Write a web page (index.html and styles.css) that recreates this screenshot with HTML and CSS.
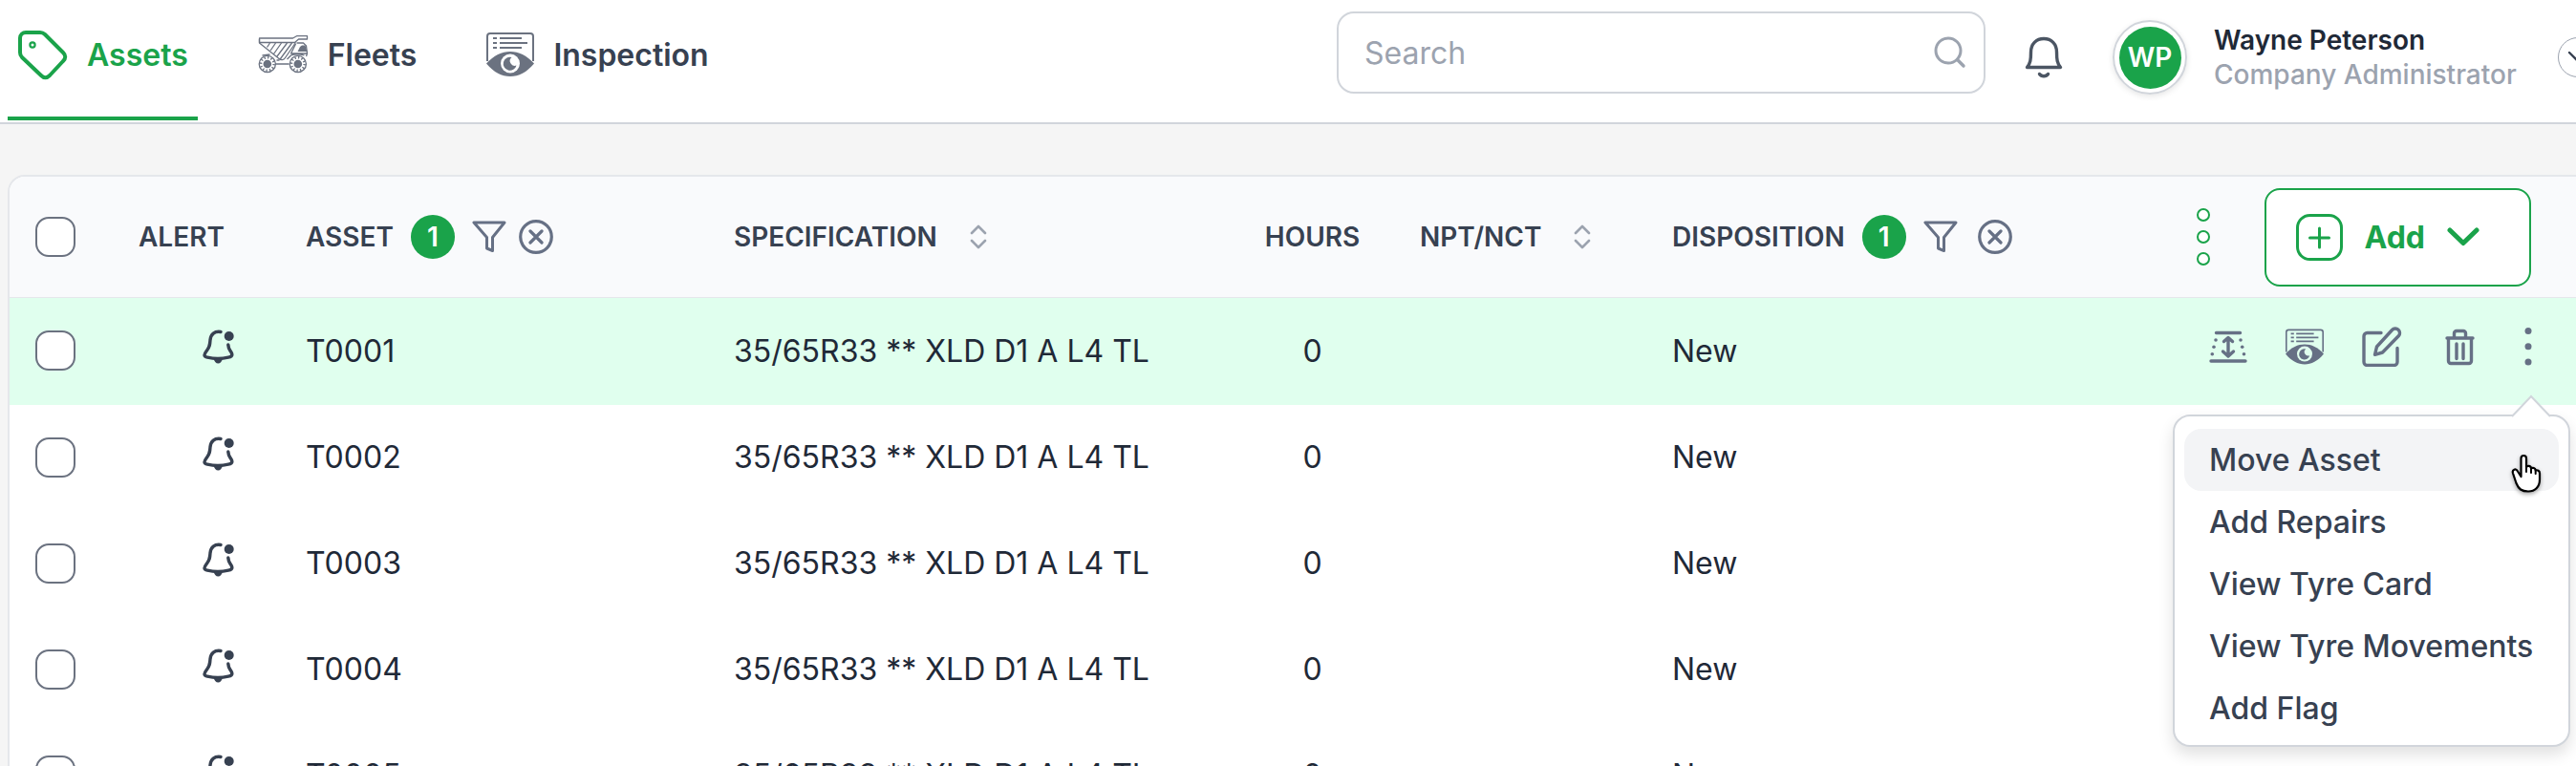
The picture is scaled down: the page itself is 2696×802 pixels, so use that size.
FILE: index.html
```html
<!DOCTYPE html>
<html lang="en">

<head>
  <meta charset="UTF-8">
  <meta name="viewport" content="width=device-width, initial-scale=1">
  <title>Assets</title>
  <link rel="stylesheet" href="styles.css">
</head>

<body>
  <!-- Shared icons -->
  <svg class="sprite" aria-hidden="true">
    <symbol id="icon-tag" viewBox="0 0 53 53">
      <path d="M3 9a6 6 0 0 1 6-6h15c2 0 3.500 .6 5 2l19 19c3 3 3 6 0 9L34 48c-3 3-6 3-9 0L5 29c-1.400-1.500-2-3-2-5z" fill="none" stroke="currentColor" stroke-width="4" stroke-linejoin="round"/>
      <circle cx="16" cy="16" r="2.600" fill="none" stroke="currentColor" stroke-width="2.200"/>
    </symbol>
    <symbol id="icon-truck" viewBox="0 0 52 40">
      <g fill="none" stroke="currentColor" stroke-width="1.300" stroke-linejoin="round">
        <path d="M1 3h35l4-2.300h11V4h-9l-4 3.500H1z"/>
        <path d="M1 4v4l20 16c2.500 2.500 5.500 2 7-.5L39 7.500M12 8l-3 4.500M18 8l-5.500 8M24 8l-8 11.500M30 8 19.500 22M35 8 23 24.500"/>
        <path d="M40 8h7l3 3 1 8-1 3M39 9l-5 10h17M12 20l-8 1M18 30h14M19 26l3 0M30 25l4-4c5-2 11-1 14 0"/>
        <circle cx="9.300" cy="30" r="8.600"/>
        <circle cx="41.300" cy="30" r="8.600"/>
        <circle cx="9.300" cy="30" r="6.800" stroke-dasharray="1.300 2.260" stroke-width="2.400"/>
        <circle cx="41.300" cy="30" r="6.800" stroke-dasharray="1.300 2.260" stroke-width="2.400"/>
      </g>
      <circle cx="9.300" cy="30" r="4.300" fill="currentColor"/>
      <circle cx="41.300" cy="30" r="4.300" fill="currentColor"/>
      <path d="M41 17l2.500-5 2-1.500H49l2 6.500z" fill="currentColor"/>
    </symbol>
    <symbol id="icon-inspect" viewBox="0 0 50 46">
      <path d="M1 30V4a3 3 0 0 1 3-3h42a3 3 0 0 1 3 3v26" fill="none" stroke="currentColor" stroke-width="2"/>
      <path d="M7 6h4M14 6h23M7 11h4M14 11h29M7 16h4M14 16h23" fill="none" stroke="currentColor" stroke-width="2"/>
      <path d="M0 32.500C8 24 16 20 25 20s17 4 25 12.500C42 42 34 46 25 46S8 42 0 32.500z" fill="currentColor"/>
      <circle class="cut" cx="25" cy="32.500" r="10"/>
      <path d="M26.500 26a5 5 0 0 0 5 8.500 7 7 0 1 1-5-8.500z" fill="currentColor"/>
    </symbol>
    <symbol id="icon-alert" viewBox="0 0 33 36">
      <g fill="none" stroke="currentColor" stroke-width="3.400" stroke-linecap="round">
        <path d="M19 2.500C12.500 1.500 8.500 5 8 11c-.3 5-.5 7-3.500 11-1.500 2-2.700 3.500-2.500 5 .2 1.300 1.500 1.900 3 2.200 7 1.600 15 1.600 22 0 2.500-.5 4-1.500 3.800-3.200-.2-1.500-1-2.500-2-4-1.200-1.800-1.800-3.500-2-6"/>
      </g>
      <circle cx="27.700" cy="7" r="5" fill="currentColor"/>
      <path d="M11.500 30h9.500c-.5 3.500-2.500 5.500-4.700 5.500S12 33.500 11.500 30z" fill="currentColor"/>
    </symbol>
    <symbol id="icon-funnel" viewBox="0 0 36 36">
      <path d="M2 3h32L21.500 18.500v14l-6-2.500V18.500z" fill="none" stroke="currentColor" stroke-width="3" stroke-linejoin="round"/>
    </symbol>
    <symbol id="icon-clear" viewBox="0 0 36 36">
      <path d="M12 12l12 12M24 12 12 24" stroke="currentColor" stroke-width="3.200" stroke-linecap="round"/>
      <circle cx="18" cy="18" r="16.300" fill="none" stroke="currentColor" stroke-width="3.200"/>
    </symbol>
    <symbol id="icon-sort" viewBox="0 0 18 26">
      <path d="M2 9l7-7 7 7M2 17l7 7 7-7" fill="none" stroke="currentColor" stroke-width="2.600" stroke-linecap="round" stroke-linejoin="round"/>
    </symbol>
  </svg>

  <!-- Top navigation bar -->
  <header class="topbar">
    <nav class="tabs">
      <a class="tab tab-active" href="#assets">
        <svg class="tab-icon"><use href="#icon-tag"/></svg>Assets
      </a>
      <a class="tab" href="#fleets">
        <svg class="tab-icon tab-icon-truck"><use href="#icon-truck"/></svg>Fleets
      </a>
      <a class="tab" href="#inspection">
        <svg class="tab-icon tab-icon-form"><use href="#icon-inspect"/></svg>Inspection
      </a>
    </nav>

    <div class="topbar-right">
      <div class="search">
        <input type="search" placeholder="Search" aria-label="Search">
        <svg class="search-icon" viewBox="0 0 34 34">
          <circle cx="15" cy="15" r="13" fill="none" stroke="currentColor" stroke-width="3"/>
          <path d="M24.500 24.500 31 31" stroke="currentColor" stroke-width="3.400" stroke-linecap="round"/>
        </svg>
      </div>
      <button class="icon-button bell" type="button" aria-label="Notifications">
        <svg width="40" height="44" viewBox="0 0 40 44">
          <path d="M2.500 32.500c3.500-4.500 4-8 4-16C6.500 8 12 2.500 20 2.500S33.500 8 33.500 16.500c0 8 .5 11.500 4 16z" fill="none" stroke="currentColor" stroke-width="3.400" stroke-linejoin="round"/>
          <path d="M15.500 39.500c2 3 7 3 9 0" fill="none" stroke="currentColor" stroke-width="3.400" stroke-linecap="round"/>
        </svg>
      </button>
      <div class="avatar"><span>WP</span></div>
      <div class="user">
        <div class="user-name">Wayne Peterson</div>
        <div class="user-role">Company Administrator</div>
      </div>
      <button class="icon-button user-toggle" type="button" aria-label="Account menu">
        <svg width="22" height="12" viewBox="0 0 22 12"><path d="M2 1l9 9 9-9" fill="none" stroke="currentColor" stroke-width="2.400" stroke-linecap="round"/></svg>
      </button>
    </div>
  </header>

  <!-- Asset list -->
  <main class="content">
    <table class="assets">
      <colgroup>
        <col class="col-check">
        <col class="col-alert">
        <col class="col-asset">
        <col class="col-spec">
        <col class="col-hours">
        <col class="col-npt">
        <col class="col-disposition">
        <col>
      </colgroup>
      <thead>
        <tr>
          <th><input type="checkbox" class="check" aria-label="Select all assets"></th>
          <th>ALERT</th>
          <th>
            <div class="heading">ASSET
              <span class="count">1</span>
              <button class="icon-button" type="button" aria-label="Filter asset"><svg class="head-icon"><use href="#icon-funnel"/></svg></button>
              <button class="icon-button" type="button" aria-label="Clear asset filter"><svg class="head-icon"><use href="#icon-clear"/></svg></button>
            </div>
          </th>
          <th>
            <div class="heading heading-sort">SPECIFICATION
              <button class="icon-button" type="button" aria-label="Sort by specification"><svg class="sort-icon"><use href="#icon-sort"/></svg></button>
            </div>
          </th>
          <th class="hours">HOURS</th>
          <th>
            <div class="heading heading-sort">NPT/NCT
              <button class="icon-button" type="button" aria-label="Sort by NPT/NCT"><svg class="sort-icon"><use href="#icon-sort"/></svg></button>
            </div>
          </th>
          <th>
            <div class="heading heading-wide">DISPOSITION
              <span class="count">1</span>
              <button class="icon-button" type="button" aria-label="Filter disposition"><svg class="head-icon"><use href="#icon-funnel"/></svg></button>
              <button class="icon-button" type="button" aria-label="Clear disposition filter"><svg class="head-icon"><use href="#icon-clear"/></svg></button>
            </div>
          </th>
          <th>
            <div class="toolbar">
              <button class="icon-button columns" type="button" aria-label="Columns">
                <svg width="14" height="60" viewBox="0 0 14 60"><g fill="#fff" stroke="currentColor" stroke-width="2"><circle cx="7" cy="7" r="6"/><circle cx="7" cy="30" r="6"/><circle cx="7" cy="53" r="6"/></g></svg>
              </button>
              <button class="add" type="button">
                <svg width="49" height="49" viewBox="0 0 49 49" fill="none" stroke="currentColor" stroke-width="3" stroke-linecap="round">
                  <rect x="1.500" y="1.500" width="46" height="46" rx="13"/>
                  <path d="M24.500 15v20M14.500 25h20"/>
                </svg>
                Add
                <svg width="34" height="20" viewBox="0 0 34 20"><path d="M3 3l14 13.500L31 3" fill="none" stroke="currentColor" stroke-width="5" stroke-linecap="round" stroke-linejoin="round"/></svg>
              </button>
            </div>
          </th>
        </tr>
      </thead>
      <tbody>
        <tr class="selected">
          <td><input type="checkbox" class="check" aria-label="Select T0001"></td>
          <td class="alert"><svg class="alert-icon"><use href="#icon-alert"/></svg></td>
          <td>T0001</td>
          <td>35/65R33 ** XLD D1 A L4 TL</td>
          <td class="hours">0</td>
          <td></td>
          <td>New</td>
          <td class="actions-cell">
            <div class="actions">
              <button class="icon-button" type="button" aria-label="Measure">
                <svg width="40" height="40" viewBox="0 0 40 40">
                  <g fill="none" stroke="currentColor" stroke-width="3.400" stroke-linecap="round" stroke-linejoin="round">
                    <path d="M7.500 5.500h25M2 35h36M20 11.500v18M15.500 14.500 20 10.500l4.500 4M14.500 25l5.500 5 5.500-5"/>
                  </g>
                  <g fill="currentColor"><circle cx="7" cy="13" r="1.800"/><circle cx="5" cy="20.300" r="1.800"/><circle cx="3.300" cy="27.700" r="1.800"/><circle cx="33" cy="13" r="1.800"/><circle cx="34.700" cy="20.300" r="1.800"/><circle cx="36.500" cy="27.700" r="1.800"/></g>
                </svg>
              </button>
              <button class="icon-button" type="button" aria-label="Inspect">
                <svg width="40" height="38"><use href="#icon-inspect"/></svg>
              </button>
              <button class="icon-button" type="button" aria-label="Edit">
                <svg width="42" height="42" viewBox="0 0 42 42" fill="none" stroke="currentColor" stroke-width="3.400" stroke-linecap="round" stroke-linejoin="round">
                  <path d="M20 6.500H5.500a3.500 3.500 0 0 0-3.500 3.500v27a3.500 3.500 0 0 0 3.500 3.500h28A3.500 3.500 0 0 0 37 37V22.500"/>
                  <path d="M31.500 3.500a4.500 4.500 0 0 1 6.800 6.300L21.500 27 13.500 29.300l2-8.300z"/>
                </svg>
              </button>
              <button class="icon-button" type="button" aria-label="Delete">
                <svg width="40" height="40" viewBox="0 0 40 40" fill="none" stroke="currentColor" stroke-width="3.400" stroke-linecap="round" stroke-linejoin="round">
                  <path d="M7 11h27M8.500 11.500V35a2.500 2.500 0 0 0 2.500 2.500h19a2.500 2.500 0 0 0 2.500-2.500V11.500M14.500 10V6a2.500 2.500 0 0 1 2.500-2.500h7A2.500 2.500 0 0 1 26.500 6v4M17 17v15.500M24 17v15.500"/>
                </svg>
              </button>
              <button class="icon-button more" type="button" aria-label="More actions">
                <svg width="8" height="40" viewBox="0 0 8 40" fill="currentColor"><circle cx="4" cy="3.500" r="3.500"/><circle cx="4" cy="19.700" r="3.500"/><circle cx="4" cy="36" r="3.500"/></svg>
              </button>
            </div>
            <!-- Row menu -->
            <div class="menu">
              <svg class="menu-arrow" width="40" height="24" viewBox="0 0 40 24"><path d="M1 22.500 20 2l19 20.500V24H1z" fill="#fff"/><path d="M0 23 20 2l20 21" fill="none" stroke="#d1d5db" stroke-width="2"/></svg>
              <button class="menu-item menu-item-active" type="button">Move Asset</button>
              <button class="menu-item" type="button">Add Repairs</button>
              <button class="menu-item" type="button">View Tyre Card</button>
              <button class="menu-item" type="button">View Tyre Movements</button>
              <button class="menu-item" type="button">Add Flag</button>
              <svg class="pointer" width="32" height="42" viewBox="0 0 32 42">
                <path d="M10.500 24V5c0-4 5.500-4 5.500 0v9c1-2 5-1.500 5 1.500 1.500-1.500 4.500-.5 4.700 2 2-.8 4.300.5 4.300 3V27c0 8-5 12.500-12 12.500C11 39.500 8 37 5.500 31L2 20.500c-1.200-4 3-5.500 5-2z" fill="#fff" stroke="#000" stroke-width="2.200" stroke-linejoin="round"/>
                <path d="M16 13v6M21 15.500V20M25.700 17.500V21" stroke="#000" stroke-width="2" stroke-linecap="round"/>
              </svg>
            </div>
          </td>
        </tr>
        <tr>
          <td><input type="checkbox" class="check" aria-label="Select T0002"></td>
          <td class="alert"><svg class="alert-icon"><use href="#icon-alert"/></svg></td>
          <td>T0002</td>
          <td>35/65R33 ** XLD D1 A L4 TL</td>
          <td class="hours">0</td>
          <td></td>
          <td>New</td>
          <td></td>
        </tr>
        <tr>
          <td><input type="checkbox" class="check" aria-label="Select T0003"></td>
          <td class="alert"><svg class="alert-icon"><use href="#icon-alert"/></svg></td>
          <td>T0003</td>
          <td>35/65R33 ** XLD D1 A L4 TL</td>
          <td class="hours">0</td>
          <td></td>
          <td>New</td>
          <td></td>
        </tr>
        <tr>
          <td><input type="checkbox" class="check" aria-label="Select T0004"></td>
          <td class="alert"><svg class="alert-icon"><use href="#icon-alert"/></svg></td>
          <td>T0004</td>
          <td>35/65R33 ** XLD D1 A L4 TL</td>
          <td class="hours">0</td>
          <td></td>
          <td>New</td>
          <td></td>
        </tr>
        <tr>
          <td><input type="checkbox" class="check" aria-label="Select T0005"></td>
          <td class="alert"><svg class="alert-icon"><use href="#icon-alert"/></svg></td>
          <td>T0005</td>
          <td>35/65R33 ** XLD D1 A L4 TL</td>
          <td class="hours">0</td>
          <td></td>
          <td>New</td>
          <td></td>
        </tr>
      </tbody>
    </table>
  </main>
</body>

</html>
```
FILE: styles.css
```css
* {
  box-sizing: border-box;
}

body {
  --surface: #fff;
  margin: 0;
  height: 100vh;
  overflow: hidden;
  background: #f5f5f5;
  color: #1f2937;
  font-family: Inter, "Liberation Sans", sans-serif;
  font-size: 32px;
}

button,
input {
  font-family: inherit;
}

svg {
  display: block;
  flex-shrink: 0;
}

.sprite {
  position: absolute;
  width: 0;
  height: 0;
}

.cut {
  fill: var(--surface);
}

.icon-button {
  display: flex;
  align-items: center;
  justify-content: center;
  padding: 0;
  border: none;
  background: none;
  color: #667085;
  cursor: pointer;
}

/* Top bar */
.topbar {
  display: flex;
  justify-content: space-between;
  height: 130px;
  padding-left: 8px;
  overflow: hidden;
  background: #fff;
  border-bottom: 2px solid #d1d5db;
}

.tabs {
  display: flex;
  gap: 53px;
  height: 126px;
}

.tab {
  display: flex;
  align-items: center;
  gap: 20px;
  padding: 0 10px 8px;
  border-bottom: 4px solid transparent;
  color: #374151;
  font-weight: 600;
  text-decoration: none;
}

.tab-active {
  color: #1aa34a;
  border-bottom-color: #1aa34a;
}

.tab-icon {
  width: 53px;
  height: 53px;
}

.tab-icon-truck {
  height: 40px;
  color: #6b7280;
}

.tab-icon-form {
  width: 50px;
  height: 46px;
  color: #6b7280;
}

.topbar-right {
  display: flex;
  align-items: center;
  padding-bottom: 8px;
  margin-right: -23px;
}

.search {
  display: flex;
  align-items: center;
  width: 679px;
  height: 86px;
  padding: 0 18px 0 27px;
  margin-bottom: 10px;
  border: 2px solid #d1d5db;
  border-radius: 18px;
  color: #9ca3af;
}

.search input {
  flex: 1;
  min-width: 0;
  padding: 0;
  border: none;
  outline: none;
  background: none;
  font-size: 32px;
}

.search input::placeholder {
  color: #9ca3af;
}

.search-icon {
  width: 34px;
  height: 34px;
}

.bell {
  margin: 0 52px 0 41px;
  color: #4b5563;
}

.avatar {
  display: flex;
  align-items: center;
  justify-content: center;
  width: 78px;
  height: 78px;
  margin-right: 28px;
  border: 2px solid #d1d5db;
  border-radius: 50%;
  box-shadow: 0 2px 6px rgba(0, 0, 0, 0.1);
}

.avatar span {
  width: 65px;
  height: 65px;
  border-radius: 50%;
  background: #1aa34a;
  color: #fff;
  font-size: 28px;
  font-weight: 600;
  line-height: 65px;
  text-align: center;
}

.user {
  min-width: 360px;
  font-size: 28px;
  line-height: 36px;
}

.user-name {
  font-weight: 600;
}

.user-role {
  color: #9ca3af;
  font-weight: 500;
}

.user-toggle {
  width: 42px;
  height: 42px;
  border: 1px solid #9ca3af;
  border-radius: 50%;
  color: #374151;
}

/* Asset table */
.content {
  padding: 53px 0 0 8px;
}

.assets {
  width: 100%;
  table-layout: fixed;
  border-collapse: separate;
  border-spacing: 0;
  border: 2px solid #e5e7eb;
  border-right: none;
  border-top-left-radius: 18px;
  background: #fff;
}

.col-check {
  width: 108px;
}

.col-alert {
  width: 175px;
}

.col-asset {
  width: 448px;
}

.col-spec {
  width: 547px;
}

.col-hours {
  width: 171px;
}

.col-npt {
  width: 264px;
}

.col-disposition {
  width: 548px;
}

th,
td {
  padding: 0 0 0 27px;
  text-align: left;
  white-space: nowrap;
}

th {
  height: 127px;
  background: #f9fafc;
  border-bottom: 1px solid #e5e7eb;
  color: #374151;
  font-size: 28px;
  font-weight: 600;
}

th:first-child {
  border-top-left-radius: 16px;
}

td {
  height: 111px;
  padding-bottom: 2px;
}

.selected td {
  --surface: #e0ffee;
  height: 112px;
  background: #e0ffee;
}

.hours {
  padding-left: 0;
  text-align: center;
}

.check {
  appearance: none;
  display: block;
  width: 42px;
  height: 42px;
  margin: 0;
  border: 2px solid #6b7280;
  border-radius: 14px;
  background: #fff;
}

.heading {
  display: flex;
  align-items: center;
  gap: 13px;
}

.heading .count {
  margin: 0 5px;
}

.heading-sort {
  gap: 34px;
}

.heading-wide {
  gap: 21px;
}

.heading-wide .count {
  margin: 0 -3px;
}

.count {
  width: 46px;
  height: 46px;
  border-radius: 50%;
  background: #1aa34a;
  color: #fff;
  line-height: 46px;
  text-align: center;
}

.head-icon {
  width: 36px;
  height: 36px;
}

.sort-icon {
  width: 18px;
  height: 26px;
  color: #9ca3af;
}

.toolbar {
  display: flex;
  align-items: center;
  justify-content: flex-end;
  gap: 57px;
  padding-right: 47px;
}

.columns {
  color: #1aa34a;
}

.add {
  display: flex;
  align-items: center;
  gap: 23px;
  height: 103px;
  padding: 0 52px 0 31px;
  border: 2px solid #1aa34a;
  border-radius: 16px;
  background: #fff;
  color: #1aa34a;
  font-size: 32px;
  font-weight: 700;
  cursor: pointer;
}

.alert {
  padding: 0 48px 10px 0;
}

.alert-icon {
  width: 33px;
  height: 36px;
  margin-left: auto;
  color: #374151;
}

.actions-cell {
  position: relative;
}

.actions {
  display: flex;
  align-items: center;
  justify-content: flex-end;
  gap: 40px;
  padding: 0 38px 8px 0;
}

.more {
  width: 24px;
}

/* Row menu */
.menu {
  position: absolute;
  z-index: 2;
  top: 122px;
  right: 6px;
  width: 416px;
  padding: 13px 10px 6px;
  border: 2px solid #d1d5db;
  border-radius: 18px;
  background: #fff;
  box-shadow: 0 8px 16px rgba(0, 0, 0, 0.12);
}

.menu-arrow {
  position: absolute;
  top: -23px;
  right: 19px;
}

.menu-item {
  display: block;
  width: 100%;
  height: 65px;
  padding: 0 0 0 26px;
  border: none;
  border-radius: 18px;
  background: none;
  color: #374151;
  font-size: 32px;
  font-weight: 500;
  text-align: left;
  cursor: pointer;
}

.menu-item-active {
  background: #f3f4f6;
}

.pointer {
  position: absolute;
  top: 39px;
  right: 28px;
  filter: drop-shadow(0 2px 2px rgba(0, 0, 0, 0.35));
}
```
